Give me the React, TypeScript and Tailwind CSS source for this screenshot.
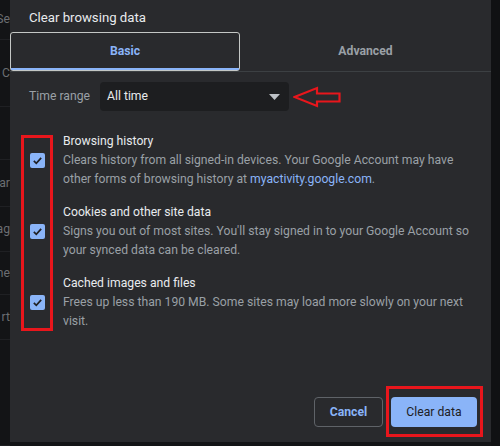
import React from 'react';

// Background page rows peeking out on the left edge behind the dialog
const backdropRows = [
  { h: 'h-[40px]', text: 'Se' },
  { h: 'h-[67px]', text: 'd C' },
  { h: 'h-[53px]', text: '' },
  { h: 'h-[47px]', text: 'ar' },
  { h: 'h-[45px]', text: 'ag' },
  { h: 'h-[43px]', text: 'me' },
  { h: 'h-[45px]', text: 'rt' },
  { h: 'h-[106px]', text: '' },
];

const items = [
  {
    title: 'Browsing history',
    lines: [
      <>Clears history from all signed-in devices. Your Google Account may have</>,
      <>
        other forms of browsing history at{' '}
        <span className="text-[#8ab4f8]">myactivity.google.com</span>.
      </>,
    ],
  },
  {
    title: 'Cookies and other site data',
    lines: [
      <>Signs you out of most sites. You'll stay signed in to your Google Account so</>,
      <>your synced data can be cleared.</>,
    ],
  },
  {
    title: 'Cached images and files',
    lines: [
      <>Frees up less than 190 MB. Some sites may load more slowly on your next</>,
      <>visit.</>,
    ],
  },
];

const CheckBox = () => (
  <div className="w-[15px] h-[15px] rounded-[2px] bg-[#8ab4f8] flex items-center justify-center">
    <svg width="11" height="11" viewBox="0 0 12 12" fill="none">
      <path d="M2 6.3 4.7 9 10 3.2" stroke="#202124" strokeWidth="1.9" />
    </svg>
  </div>
);

const App: React.FC = () => {
  return (
    <div
      className="w-[500px] h-[446px] bg-[#131416] flex overflow-hidden text-[12.2px]"
      style={{ fontFamily: 'Roboto, "Liberation Sans", sans-serif' }}
    >
      {/* page behind the dialog */}
      <div className="w-[10px] shrink-0 flex flex-col overflow-hidden">
        {backdropRows.map((r, i) => (
          <div
            key={i}
            className={`${r.h} shrink-0 border-b border-[#1f2023] flex items-center justify-end whitespace-nowrap text-[#6b6e72]`}
          >
            {r.text}
          </div>
        ))}
      </div>

      {/* dialog */}
      <div className="relative w-[481px] h-[442px] shrink-0 bg-[#292a2d] flex flex-col">
        <div className="h-[32px] pl-[19px] pt-[4px] flex items-center text-[13.2px] text-[#e8eaed]">
          Clear browsing data
        </div>

        <div className="h-[40px] flex border-b border-[#3c4043]">
          <div className="relative w-[230px] flex items-center justify-center rounded-[3px] border border-[#c4c7c5] font-bold text-[#8ab4f8]">
            Basic
            <div className="absolute left-0 right-0 bottom-0 h-[2px] bg-[#8ab4f8]" />
          </div>
          <div className="flex-1 flex items-center justify-center font-bold text-[#9aa0a6]">Advanced</div>
        </div>

        <div className="mt-[10px] h-[29px] flex items-center">
          <div className="pl-[19px] w-[90px] text-[#9aa0a6]">Time range</div>
          <div className="w-[189px] h-[29px] rounded-[4px] bg-[#1d1e20] flex items-center justify-between pl-[7px] pr-[9px] text-[#e8eaed]">
            <span>All time</span>
            <svg width="11" height="6" viewBox="0 0 11 6">
              <path d="M0 0h11L5.5 6z" fill="#bdc1c6" />
            </svg>
          </div>
          <svg className="ml-[4px]" width="48" height="22" viewBox="0 0 48 22" fill="none">
            <path
              d="M1.5 11 24 2v5.5h22.5v8H24V20z"
              stroke="#e8161c"
              strokeWidth="2.2"
              strokeLinejoin="miter"
            />
          </svg>
        </div>

        <div className="mt-[21px] flex flex-col gap-[14px]">
          {items.map((item) => (
            <div key={item.title} className="flex items-center">
              <div className="w-[53px] pl-[20px] shrink-0">
                <CheckBox />
              </div>
              <div className="flex flex-col leading-[19px] whitespace-nowrap">
                <div className="text-[#e8eaed]">{item.title}</div>
                {item.lines.map((line, i) => (
                  <div key={i} className="text-[#9aa0a6]">
                    {line}
                  </div>
                ))}
              </div>
            </div>
          ))}
        </div>

        <div className="mt-auto pb-[15px] pr-[14px] flex justify-end gap-[8px]">
          <button className="w-[69px] h-[30px] rounded-[4px] border border-[#5f6368] font-bold text-[#8ab4f8]">
            Cancel
          </button>
          <button className="w-[86px] h-[30px] rounded-[4px] bg-[#8ab4f8] text-[#202124]">Clear data</button>
        </div>

        {/* red annotation boxes */}
        <div className="absolute left-[11px] top-[135px] w-[32px] h-[196px] border-[3px] border-[#e8161c]" />
        <div className="absolute left-[376px] top-[386px] w-[97px] h-[51px] border-[3px] border-[#e8161c]" />
      </div>

      <div className="flex-1 bg-[#101113]" />
    </div>
  );
};

export default App;
